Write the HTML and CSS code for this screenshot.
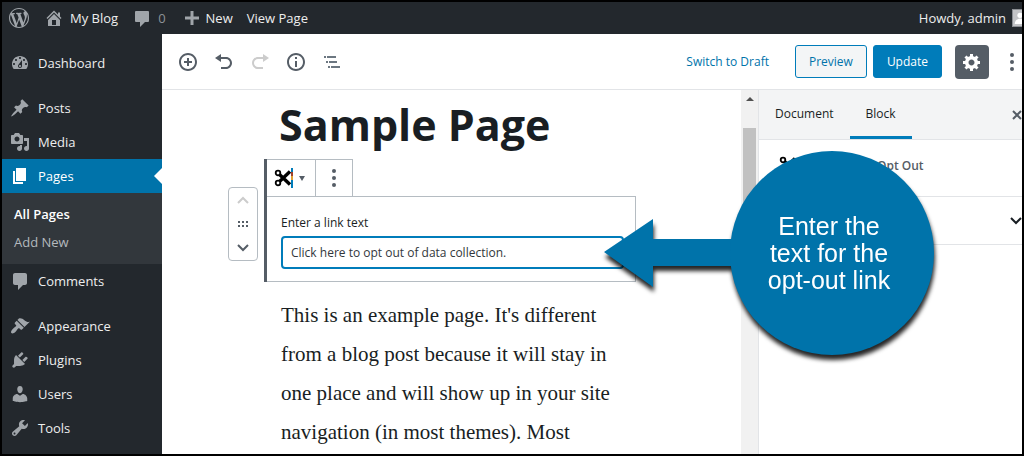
FILE: index.html
```html
<!DOCTYPE html>
<html lang="en">
<head>
<meta charset="utf-8">
<title>Edit Page</title>
<link rel="stylesheet" href="styles.css">
</head>
<body>
<div class="app">
  <header class="adminbar">
    <a class="bar-item bar-logo" href="#" aria-label="About WordPress"><svg class="icon" viewBox="0 0 20 20"><path d="M20 10c0-5.51-4.49-10-10-10C4.48 0 0 4.49 0 10c0 5.52 4.48 10 10 10 5.51 0 10-4.48 10-10zM7.78 15.37L4.37 6.22c.55-.02 1.17-.08 1.17-.08.5-.06.44-1.13-.06-1.11 0 0-1.45.11-2.37.11-.18 0-.37 0-.58-.01C4.12 2.69 6.87 1.11 10 1.11c2.33 0 4.45.87 6.05 2.34-.68-.11-1.65.39-1.65 1.58 0 .74.45 1.36.9 2.1.35.61.55 1.36.55 2.46 0 1.49-1.4 5-1.4 5l-3.03-8.37c.54-.02.82-.17.82-.17.5-.05.44-1.25-.06-1.22 0 0-1.44.12-2.38.12-.87 0-2.33-.12-2.33-.12-.5-.03-.56 1.2-.06 1.22l.92.08 1.26 3.41zM17.41 10c.24-.64.74-1.87.43-4.25.7 1.29 1.05 2.71 1.05 4.25 0 3.29-1.73 6.24-4.4 7.78.97-2.59 1.94-5.2 2.92-7.78zM6.1 18.09C3.12 16.65 1.11 13.53 1.11 10c0-1.3.23-2.48.72-3.59C3.25 10.3 4.67 14.2 6.1 18.09zm4.03-6.63l2.58 6.98c-.86.29-1.76.45-2.71.45-.79 0-1.57-.11-2.29-.33.81-2.38 1.62-4.74 2.42-7.1z"/></svg></a>
    <a class="bar-item bar-site" href="#"><svg class="icon" viewBox="0 0 20 20"><path d="M16 8.5l1.53 1.53-1.06 1.06L10 4.6l-6.47 6.49-1.06-1.06L10 2.5l4 4v-2h2v4zm-6-2.46l6 5.99V18H4v-5.97zM12 17v-5H8v5h4z"/></svg>My Blog</a>
    <a class="bar-item bar-comments" href="#"><svg class="icon" viewBox="0 0 20 20"><path d="M4 3h12q1 0 1 1v9q0 1-1 1h-3l-5 5v-5H4q-1 0-1-1V4q0-1 1-1z"/></svg><span class="muted">0</span></a>
    <a class="bar-item bar-new" href="#"><svg class="icon" viewBox="0 0 20 20"><path d="M8.500 3h3v5.500h5.500v3h-5.500v5.500h-3v-5.500H3v-3h5.500z"/></svg>New</a>
    <a class="bar-item bar-view" href="#">View Page</a>
    <a class="bar-item bar-user" href="#">Howdy, admin<span class="avatar"><svg viewBox="0 0 16 16"><circle cx="8" cy="6" r="3"/><path d="M2 16c0-8 12-8 12 0z"/></svg></span></a>
  </header>

  <div class="body">
    <nav class="menu" aria-label="Admin menu">
      <a class="menu-item" href="#"><svg class="icon" viewBox="0 0 20 20"><path d="M3.760 16h12.480c1.100-1.370 1.760-3.110 1.760-5 0-4.420-3.580-8-8-8s-8 3.580-8 8c0 1.890.66 3.630 1.760 5zM10 4c.55 0 1 .45 1 1s-.45 1-1 1-1-.45-1-1 .45-1 1-1zM6 6c.55 0 1 .45 1 1s-.45 1-1 1-1-.45-1-1 .45-1 1-1zm8 0c.55 0 1 .45 1 1s-.45 1-1 1-1-.45-1-1 .45-1 1-1zm-5.370 5.550L12 7v6c0 1.100-.9 2-2 2s-2-.9-2-2c0-.57.24-1.080.63-1.450zM4 10c.55 0 1 .45 1 1s-.45 1-1 1-1-.45-1-1 .45-1 1-1zm12 0c.55 0 1 .45 1 1s-.45 1-1 1-1-.45-1-1 .45-1 1-1zm-5 3c0-.55-.45-1-1-1s-1 .45-1 1 .45 1 1 1 1-.45 1-1z"/></svg>Dashboard</a>
      <a class="menu-item group" href="#"><svg class="icon" viewBox="0 0 20 20"><path d="M10.440 3.020l1.820-1.820 6.360 6.350-1.830 1.820c-1.050-.68-2.480-.57-3.410.36l-.75.75c-.92.93-1.040 2.350-.35 3.410l-1.830 1.820-2.410-2.410-2.800 2.790c-.42.42-3.380 2.710-3.800 2.290s1.860-3.390 2.280-3.810l2.790-2.790L4.100 9.360l1.830-1.820c1.050.69 2.480.57 3.400-.36l.75-.75c.93-.92 1.050-2.350.36-3.410z"/></svg>Posts</a>
      <a class="menu-item" href="#"><svg class="icon" viewBox="0 0 20 20"><path d="M13 11V4c0-.55-.45-1-1-1h-1.670L9 1H5L3.670 3H2c-.55 0-1 .45-1 1v7c0 .55.45 1 1 1h10c.55 0 1-.45 1-1zM7 4.500c1.380 0 2.500 1.120 2.500 2.500S8.380 9.500 7 9.500 4.500 8.380 4.500 7 5.620 4.500 7 4.500zM14 6h5v10.500c0 1.380-1.120 2.500-2.500 2.500S14 17.880 14 16.500s1.120-2.500 2.500-2.500c.17 0 .34.02.5.05V9h-3V6zm-4 8.050V13h2v3.500c0 1.380-1.120 2.500-2.500 2.500S7 17.880 7 16.500 8.120 14 9.500 14c.17 0 .34.02.5.05z"/></svg>Media</a>
      <a class="menu-item current" href="#"><svg class="icon" viewBox="0 0 20 20"><path d="M6 15V2h10v13H6zm-1 1h8v2H3V5h2v11z"/></svg>Pages</a>
      <div class="submenu">
        <a class="submenu-item active" href="#">All Pages</a>
        <a class="submenu-item" href="#">Add New</a>
      </div>
      <a class="menu-item" href="#"><svg class="icon" viewBox="0 0 20 20"><path d="M5 2h10c1.100 0 2 .9 2 2v8c0 1.100-.9 2-2 2h-2l-5 5v-5H5c-1.100 0-2-.9-2-2V4c0-1.100.9-2 2-2z"/></svg>Comments</a>
      <a class="menu-item group" href="#"><svg class="icon" viewBox="0 0 20 20"><path d="M14.480 11.060L7.410 3.990l1.500-1.500c.5-.56 2.300-.47 3.510.32 1.210.8 1.430 1.280 2.910 2.100 1.180.64 2.450 1.260 4.450.85zm-.71.71L6.700 4.700 4.930 6.470c-.39.39-.39 1.020 0 1.410l1.060 1.060c.39.39.39 1.030 0 1.420-.6.6-1.430 1.110-2.210 1.690-.35.26-.7.53-1.010.84C1.430 14.230.4 16.080 1.400 17.070c.99 1 2.840-.03 4.180-1.360.31-.31.58-.66.85-1.020.57-.78 1.080-1.610 1.690-2.210.39-.39 1.020-.39 1.410 0l1.060 1.060c.39.39 1.020.39 1.410 0z"/></svg>Appearance</a>
      <a class="menu-item" href="#"><svg class="icon" viewBox="0 0 20 20"><path d="M13.110 4.360L9.870 7.600 8 5.730l3.240-3.240c.35-.34 1.050-.2 1.560.32.52.51.66 1.210.31 1.550zm-8 1.770l.91-1.120 9.010 9.010-1.190.84c-.71.71-2.630 1.160-3.820 1.160H6.140L4.900 17.260c-.59.59-1.540.59-2.120 0-.59-.58-.59-1.530 0-2.120l1.240-1.240v-3.880c0-1.130.4-3.190 1.090-3.890zm7.260 3.970l3.240-3.240c.34-.35 1.040-.21 1.550.31.52.51.66 1.210.31 1.550l-3.240 3.250z"/></svg>Plugins</a>
      <a class="menu-item" href="#"><svg class="icon" viewBox="0 0 20 20"><path d="M10 9.250c-2.270 0-2.730-3.440-2.730-3.440C7 4.020 7.820 2 9.970 2c2.160 0 2.980 2.020 2.710 3.810 0 0-.41 3.440-2.680 3.440zm0 2.570L12.720 10c2.390 0 4.520 2.330 4.520 4.530v2.490s-3.650 1.130-7.240 1.130c-3.650 0-7.240-1.130-7.240-1.130v-2.490c0-2.250 1.940-4.480 4.470-4.480z"/></svg>Users</a>
      <a class="menu-item" href="#"><svg class="icon" viewBox="0 0 20 20"><path d="M16.680 9.770c-1.340 1.340-3.300 1.670-4.950.99l-5.410 6.520c-.99.99-2.590.99-3.580 0s-.99-2.590 0-3.570l6.520-5.420c-.68-1.650-.35-3.610.99-4.950 1.280-1.280 3.120-1.620 4.720-1.060l-2.890 2.890 2.820 2.820 2.860-2.870c.53 1.580.18 3.390-1.080 4.650zM3.810 16.210c.4.39 1.040.39 1.430 0 .4-.4.4-1.040 0-1.430-.39-.4-1.030-.4-1.430 0-.39.39-.39 1.030 0 1.430z"/></svg>Tools</a>
    </nav>

    <main class="editor">
      <div class="toolbar">
        <div class="tools">
          <button class="tool" aria-label="Add block"><svg class="icon" viewBox="0 0 20 20"><path d="M10 1c-5 0-9 4-9 9s4 9 9 9 9-4 9-9-4-9-9-9zm0 16c-3.900 0-7-3.100-7-7s3.100-7 7-7 7 3.100 7 7-3.100 7-7 7zm1-11H9v3H6v2h3v3h2v-3h3V9h-3V6z"/></svg></button>
          <button class="tool" aria-label="Undo"><svg class="icon" viewBox="0 0 20 20"><path d="M12 5H7V2L1 6l6 4V7h5c2.200 0 4 1.800 4 4s-1.800 4-4 4H7v2h5c3.300 0 6-2.700 6-6s-2.700-6-6-6z"/></svg></button>
          <button class="tool" aria-label="Redo" disabled><svg class="icon" viewBox="0 0 20 20"><path d="M8 5h5V2l6 4-6 4V7H8c-2.200 0-4 1.800-4 4s1.800 4 4 4h5v2H8c-3.300 0-6-2.700-6-6s2.700-6 6-6z"/></svg></button>
          <button class="tool" aria-label="Content structure"><svg class="icon" viewBox="0 0 20 20"><path d="M10 1c-5 0-9 4-9 9s4 9 9 9 9-4 9-9-4-9-9-9zm0 16c-3.900 0-7-3.100-7-7s3.100-7 7-7 7 3.100 7 7-3.100 7-7 7zM9 9h2v6H9zM9 5h2v2H9z"/></svg></button>
          <button class="tool" aria-label="Block navigation"><svg class="icon outline" viewBox="0 0 20 20"><path d="M2 4h2v2H2zM5 4h9v2H5zM4 9h2v2H4zM7 9h8v2H7zM6 14h2v2H6zM9 14h9v2H9z"/></svg></button>
        </div>
        <div class="actions">
          <button class="link-button">Switch to Draft</button>
          <button class="button">Preview</button>
          <button class="button primary">Update</button>
          <button class="settings" aria-label="Settings"><svg class="icon" viewBox="0 0 20 20"><path d="M18 12h-2.180c-.17.7-.44 1.350-.81 1.930l1.540 1.540-2.100 2.100-1.540-1.540c-.58.36-1.230.63-1.910.79V19H8v-2.180c-.68-.16-1.330-.43-1.910-.79l-1.540 1.540-2.120-2.120 1.540-1.540c-.36-.58-.63-1.230-.79-1.910H1V9.030h2.170c.16-.7.44-1.350.8-1.940L2.430 5.550l2.100-2.100 1.540 1.540c.58-.37 1.240-.64 1.930-.81V2h3v2.180c.68.16 1.330.43 1.910.79l1.540-1.540 2.120 2.120-1.540 1.540c.36.59.64 1.240.8 1.940H18V12zm-8.500 1.500c1.660 0 3-1.340 3-3s-1.340-3-3-3-3 1.340-3 3 1.340 3 3 3z"/></svg></button>
          <button class="more" aria-label="More tools"><svg class="icon" viewBox="0 0 20 20"><circle cx="10" cy="3" r="2"/><circle cx="10" cy="10" r="2"/><circle cx="10" cy="17" r="2"/></svg></button>
        </div>
      </div>

      <div class="workspace">
        <section class="canvas">
          <h1 class="title">Sample Page</h1>
          <div class="mover">
            <button class="mover-button" aria-label="Move up" disabled><svg viewBox="0 0 12 8"><path d="M1 7l5-5 5 5"/></svg></button>
            <svg class="grip" viewBox="0 0 12 8"><path d="M1 1h2v2H1zM5 1h2v2H5zM9 1h2v2H9zM1 5h2v2H1zM5 5h2v2H5zM9 5h2v2H9z"/></svg>
            <button class="mover-button" aria-label="Move down"><svg viewBox="0 0 12 8"><path d="M1 1l5 5 5-5"/></svg></button>
          </div>
          <div class="block">
            <div class="block-tools">
              <button class="block-type" aria-label="Change block type"><svg class="scissors" viewBox="0 0 20 20"><g fill="none" stroke="#000"><circle cx="4" cy="5" r="2.300" stroke-width="1.800"/><circle cx="4" cy="15" r="2.300" stroke-width="1.800"/><path d="M5.500 6.500L16 16.500M5.500 13.500L16 3.500" stroke-width="3.400"/></g><path fill="#007cba" d="M17 0h2v4h-2zM17 12h2v8h-2z"/><path fill="#a0412a" d="M17 4h2v4h-2z"/><path fill="#e0a030" d="M17 8h2v4h-2z"/></svg><svg class="caret" viewBox="0 0 6 5"><path d="M0 0h6L3 5z"/></svg></button>
              <button class="block-more" aria-label="More options"><svg class="icon" viewBox="0 0 20 20"><circle cx="10" cy="3" r="2"/><circle cx="10" cy="10" r="2"/><circle cx="10" cy="17" r="2"/></svg></button>
            </div>
            <div class="block-content">
              <label class="field-label" for="link-text">Enter a link text</label>
              <input class="field" id="link-text" type="text" value="Click here to opt out of data collection.">
            </div>
          </div>
          <p class="copy">This is an example page. It's different from a blog post because it will stay in one place and will show up in your site navigation (in most themes). Most</p>
        </section>

        <div class="scrollbar" aria-hidden="true"><span class="scroll-arrow"></span><span class="thumb"></span></div>

        <aside class="panel">
          <div class="tabs">
            <button class="tab">Document</button>
            <button class="tab selected">Block</button>
            <button class="close" aria-label="Close settings"><svg viewBox="0 0 10 10"><path d="M1 1l8 8M9 1l-8 8"/></svg></button>
          </div>
          <div class="block-card">
            <svg class="scissors" viewBox="0 0 20 20"><g fill="none" stroke="#000"><circle cx="4" cy="5" r="2.300" stroke-width="1.800"/><circle cx="4" cy="15" r="2.300" stroke-width="1.800"/><path d="M5.500 6.500L16 16.500M5.500 13.500L16 3.500" stroke-width="3.400"/></g></svg>
            <span class="card-title">Opt Out</span>
          </div>
          <button class="section" aria-label="Advanced"><svg viewBox="0 0 12 8"><path d="M1 1l5 5 5-5"/></svg></button>
        </aside>
      </div>
    </main>
  </div>

  <div class="callout">
    <svg class="arrow" viewBox="0 0 130 68"><path d="M0 33L49 0v20h81v27H49v21z"/></svg>
    <div class="bubble">Enter the<br>text for the<br>opt-out link</div>
  </div>
</div>
</body>
</html>
```
FILE: styles.css
```css
* { box-sizing: border-box; }

body {
  margin: 0;
  font-family: "Open Sans", "Noto Sans", sans-serif;
  font-size: 12px;
  color: #191e23;
}

a { color: inherit; text-decoration: none; }

button {
  margin: 0;
  padding: 0;
  border: 0;
  background: none;
  color: inherit;
  font: inherit;
}

svg { display: block; flex: none; fill: currentColor; }

.icon { width: 20px; height: 20px; }

.app {
  position: relative;
  display: flex;
  flex-direction: column;
  height: 100vh;
  border: 2px solid #000;
  background: #fff;
  overflow: hidden;
}

/* Admin bar */
.adminbar {
  display: flex;
  flex: none;
  align-items: center;
  height: 32px;
  padding-left: 7px;
  background: #23282d;
  color: #eee;
  font-size: 13px;
  overflow: hidden;
}

.bar-item { display: flex; align-items: center; white-space: nowrap; }
.bar-item .icon { color: #a0a5aa; }
.bar-site { gap: 6px; margin-left: 15px; }
.bar-comments { gap: 6px; margin-left: 14px; }
.bar-new { gap: 4px; margin-left: 16px; }
.bar-view { margin-left: 14px; }
.muted { color: #8d9297; }
.bar-user { gap: 6px; margin-left: auto; margin-right: -6px; }

.avatar {
  width: 16px;
  height: 18px;
  border: 1px solid #8c8f94;
  background: #c3c4c7;
  color: #fff;
}

/* Admin menu */
.body { display: flex; flex: 1; min-height: 0; }

.menu {
  flex: none;
  width: 160px;
  padding-top: 12px;
  background: #23282d;
  color: #eee;
  font-size: 13px;
}

.menu-item {
  display: flex;
  align-items: center;
  gap: 8px;
  height: 34px;
  padding-left: 8px;
}

.menu-item .icon { color: #a0a5aa; }
.group { margin-top: 11px; }

.current {
  position: relative;
  background: #0073aa;
  color: #fff;
}

.menu-item.current .icon { color: #fff; }

.current::after {
  content: "";
  position: absolute;
  right: 0;
  top: 9px;
  border: 8px solid transparent;
  border-left: 0;
  border-right-color: #fff;
}

.submenu { padding: 7px 12px 8px; background: #32373c; }

.submenu-item {
  display: block;
  color: #b4b9be;
  line-height: 28px;
}

.submenu-item.active { color: #fff; font-weight: 600; }

/* Editor header */
.editor { display: flex; flex: 1; flex-direction: column; min-width: 0; }

.toolbar {
  display: flex;
  flex: none;
  align-items: center;
  justify-content: space-between;
  height: 56px;
  padding-left: 8px;
  border-bottom: 1px solid #e2e4e7;
}

.tools { display: flex; color: #555d66; }

.tool {
  display: flex;
  align-items: center;
  justify-content: center;
  width: 36px;
  height: 36px;
}

.tool:disabled { color: #ccc; }
.outline { color: #6c7781; }

.actions { display: flex; align-items: center; }

.link-button { margin-right: 26px; color: #0073aa; }

.button {
  height: 33px;
  margin-right: 6px;
  padding: 0 13px;
  border: 1px solid #007cba;
  border-radius: 3px;
  background: #f3f5f6;
  color: #0073aa;
}

.primary { margin-right: 13px; background: #007cba; color: #fff; }

.settings {
  display: flex;
  align-items: center;
  justify-content: center;
  width: 34px;
  height: 34px;
  border-radius: 4px;
  background: #555d66;
  color: #fff;
}

.more { margin-left: 13px; color: #555d66; }

/* Canvas */
.workspace { display: flex; flex: 1; min-height: 0; }

.canvas {
  display: grid;
  flex: 1;
  grid-template-columns: 1fr 372px 1fr;
  align-content: start;
  min-width: 0;
  padding-right: 3px;
  overflow: hidden;
}

.title {
  grid-column: 2;
  margin: 0 0 0 15px;
  font-size: 43px;
  line-height: 69px;
  font-weight: 700;
  white-space: nowrap;
}

.mover {
  display: flex;
  grid-column: 1;
  flex-direction: column;
  align-items: center;
  justify-self: end;
  justify-content: space-between;
  width: 30px;
  height: 74px;
  margin: 28px 6px 0 0;
  padding: 8px 0;
  border: 1px solid #b5bcc2;
  border-radius: 4px;
  color: #555d66;
}

.mover svg { width: 12px; height: 8px; }

.mover-button svg {
  fill: none;
  stroke: currentColor;
  stroke-width: 2;
}

.mover-button:disabled { color: #ccc; }

.block { grid-column: 2; border-left: 3px solid #555d66; }

.block-tools {
  display: flex;
  width: 86px;
  height: 37px;
  border: 1px solid #b5bcc2;
  border-width: 1px 1px 0 0;
}

.block-type {
  display: flex;
  align-items: center;
  gap: 5px;
  width: 49px;
  padding-left: 7px;
  border-right: 1px solid #b5bcc2;
}

.scissors { width: 20px; height: 20px; }
.caret { width: 6px; height: 5px; color: #555d66; }

.block-more {
  display: flex;
  flex: 1;
  align-items: center;
  justify-content: center;
  color: #555d66;
}

.block-content {
  padding: 16px 11px 12px 14px;
  border: 1px solid #b5bcc2;
  border-left: 0;
}

.field-label { display: block; margin-bottom: 3px; line-height: 20px; }

.field {
  display: block;
  width: 100%;
  height: 33px;
  padding: 0 8px;
  border: 2px solid #007cba;
  border-radius: 4px;
  background: #fff;
  color: #32373c;
  font: inherit;
}

.copy {
  grid-column: 2;
  margin: 14px 16px 0 17px;
  font-family: "Liberation Serif", serif;
  font-size: 21px;
  line-height: 39px;
}

/* Scrollbar */
.scrollbar {
  display: flex;
  flex: none;
  flex-direction: column;
  align-items: center;
  width: 17px;
  background: #f1f1f1;
}

.scroll-arrow {
  margin: 7px 0 27px;
  border: 4px solid transparent;
  border-top: 0;
  border-bottom-color: #505050;
}

.thumb { width: 13px; height: 120px; background: #c1c1c1; }

/* Settings panel */
.panel {
  flex: none;
  width: 264px;
  border-left: 1px solid #e2e4e7;
}

.tabs {
  display: flex;
  height: 50px;
  border-bottom: 1px solid #e2e4e7;
  background: #f3f4f5;
}

.tab { padding: 0 16px; border-bottom: 3px solid transparent; }
.selected { border-bottom-color: #007cba; }
.close { margin-left: auto; }

.close svg {
  width: 10px;
  height: 10px;
  stroke: #555d66;
  stroke-width: 2;
}

.block-card {
  display: flex;
  align-items: center;
  gap: 78px;
  height: 57px;
  padding: 0 20px 6px;
  border-bottom: 1px solid #e2e4e7;
}

.card-title { color: #555d66; font-weight: 600; }

.section {
  display: flex;
  align-items: center;
  justify-content: flex-end;
  width: 100%;
  height: 48px;
  border-bottom: 1px solid #e2e4e7;
}

.section svg {
  width: 12px;
  height: 8px;
  fill: none;
  stroke: #191e23;
  stroke-width: 2;
}

/* Annotation over the editor */
.callout {
  position: absolute;
  left: 602px;
  top: 149px;
  display: flex;
  align-items: center;
  filter: drop-shadow(1px 5px 2px rgb(0 0 0 / 85%));
}

.arrow { width: 130px; height: 68px; margin-right: -4px; color: #0073aa; }

.bubble {
  display: flex;
  align-items: center;
  justify-content: center;
  width: 204px;
  height: 204px;
  padding-right: 6px;
  border-radius: 50%;
  background: #0073aa;
  color: #fff;
  font-family: "Liberation Sans", sans-serif;
  font-size: 25px;
  line-height: 27px;
  text-align: center;
  white-space: nowrap;
}
```
